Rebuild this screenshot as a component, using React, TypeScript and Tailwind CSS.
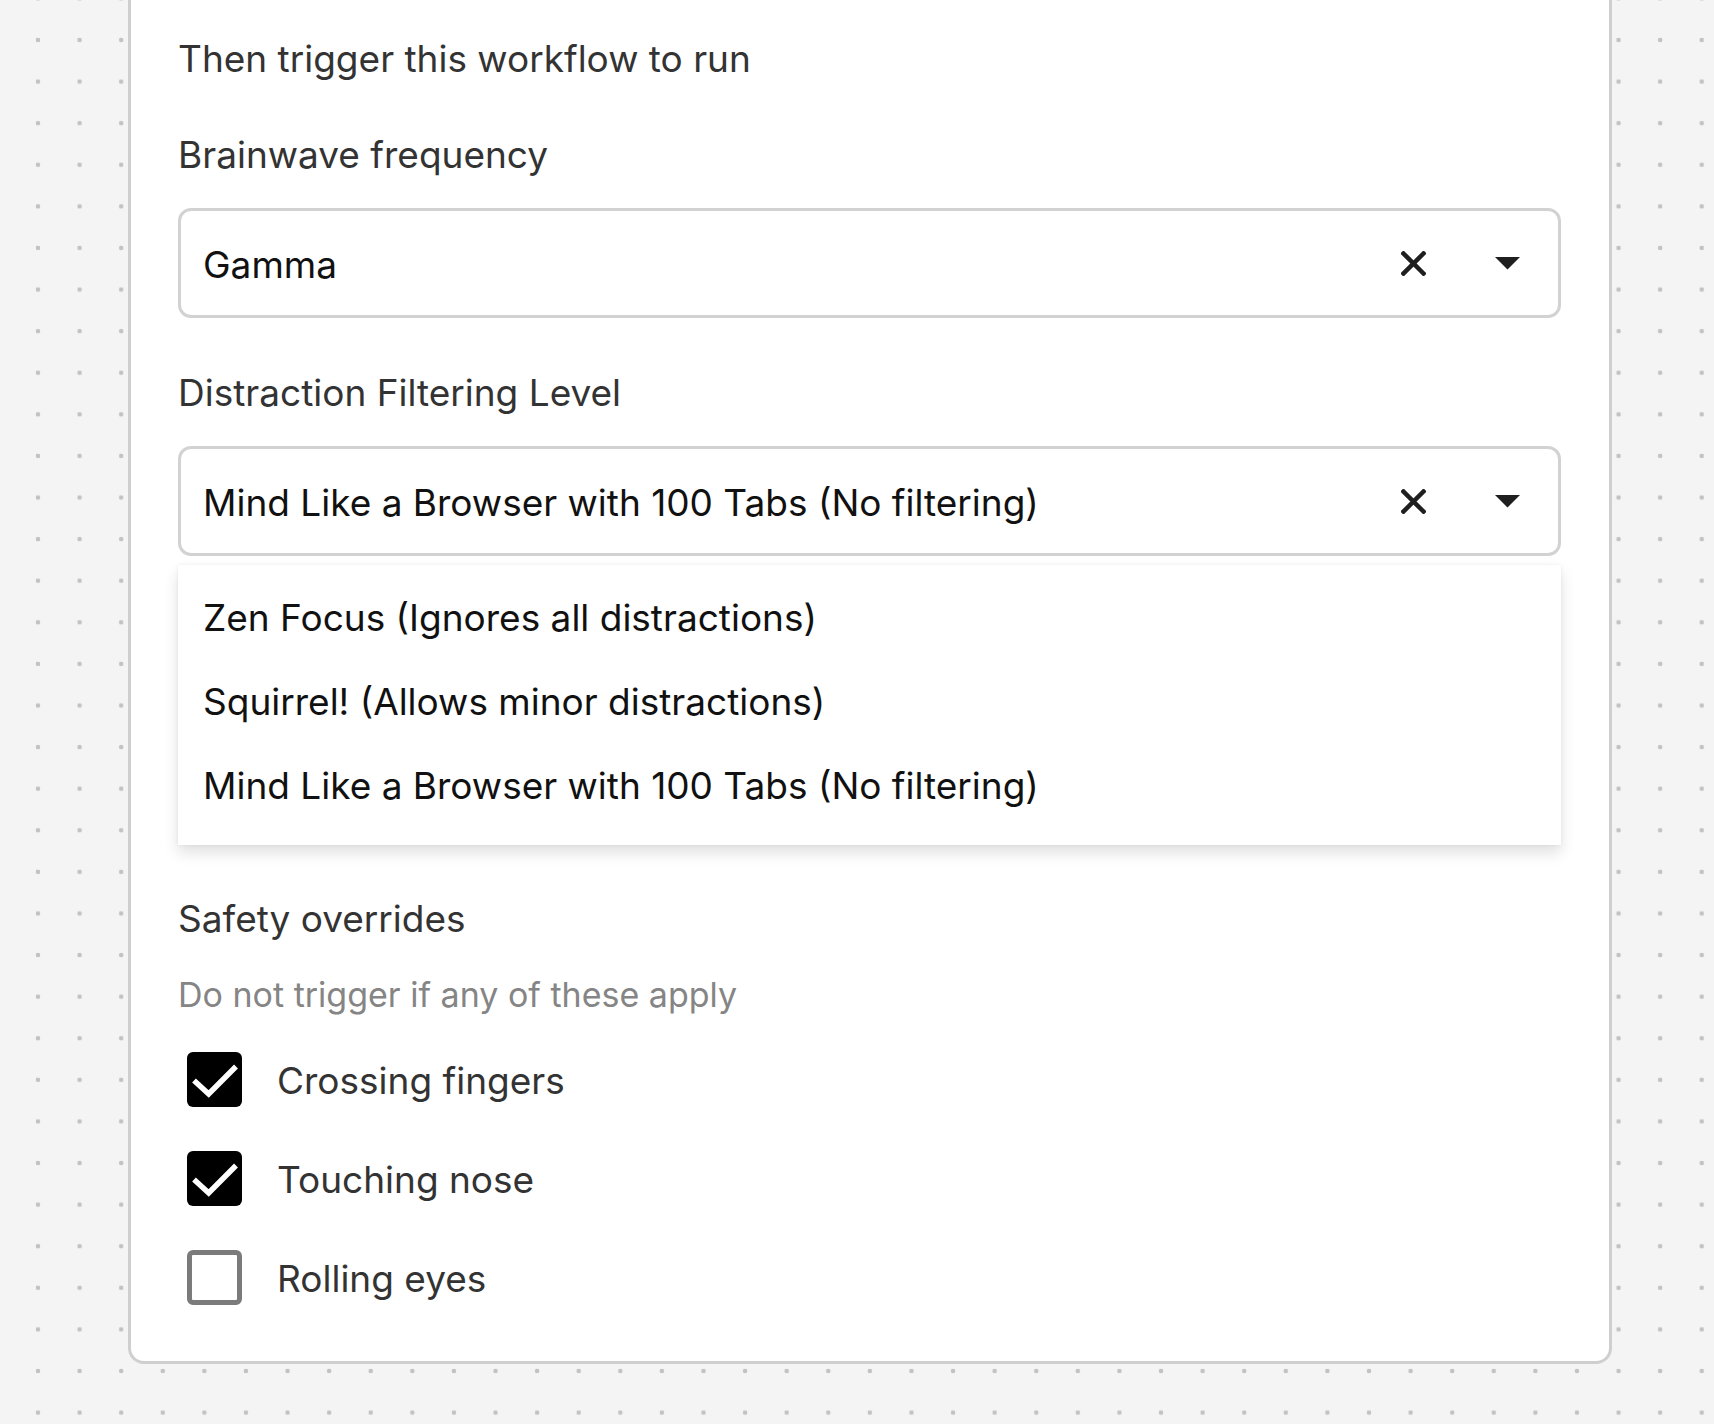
import React from "react";

function XIcon() {
  return (
    <svg width="25" height="25" viewBox="0 0 25 25" className="shrink-0">
      <path d="M2.5 2.5 L22.5 22.5 M22.5 2.5 L2.5 22.5" stroke="#1f1f1f" strokeWidth="4.5" strokeLinecap="square" fill="none" />
    </svg>
  );
}

function Caret() {
  return (
    <svg width="25" height="13" viewBox="0 0 25 13" className="shrink-0">
      <polygon points="0,0 25,0 12.5,12.5" fill="#1f1f1f" />
    </svg>
  );
}

function Select({ value }: { value: string }) {
  return (
    <div className="flex h-[110px] items-center rounded-[13px] border-[3px] border-[#d2d2d2] bg-white pl-[22px] pr-[38px]">
      <span className="flex-1 pt-[3px] text-[37px] leading-[44px] text-[#111111]">{value}</span>
      <div className="flex items-center gap-[69px]">
        <XIcon />
        <Caret />
      </div>
    </div>
  );
}

function Checkbox({ checked, label }: { checked: boolean; label: string }) {
  return (
    <div className="flex h-[55px] items-center gap-[35px] pl-[9px]">
      {checked ? (
        <div className="flex h-[55px] w-[55px] items-center justify-center rounded-[6px] bg-black">
          <svg width="55" height="55" viewBox="0 0 55 55">
            <polyline points="7,28.5 21.7,42 49,14.5" stroke="white" strokeWidth="5.5" fill="none" />
          </svg>
        </div>
      ) : (
        <div className="h-[55px] w-[55px] rounded-[6px] border-[5px] border-[#7b7b7b] bg-white" />
      )}
      <span className="pt-[2px] text-[37px] leading-[44px] text-[#333333]">{label}</span>
    </div>
  );
}

export default function App() {
  const options = [
    "Zen Focus (Ignores all distractions)",
    "Squirrel! (Allows minor distractions)",
    "Mind Like a Browser with 100 Tabs (No filtering)",
  ];
  return (
    <div
      className="min-h-[1424px] w-full bg-[#f4f4f4] bg-[radial-gradient(circle,#c2c2c2_2px,transparent_2.6px)] bg-[length:41.6px_41.6px] bg-[position:17.2px_19.2px]"
      style={{ fontFamily: "Inter, 'Noto Sans', sans-serif" }}
    >
      <div className="ml-[128px] w-[1484px] rounded-b-[16px] border-[3px] border-t-0 border-[#cfcfcf] bg-white pl-[47px] pr-[48px] pt-[37px] pb-[56px]">
        <div className="text-[37px] leading-[44px] text-[#333333]">Then trigger this workflow to run</div>

        <div className="mt-[52px] text-[37px] leading-[44px] text-[#333333]">Brainwave frequency</div>
        <div className="mt-[31px]">
          <Select value="Gamma" />
        </div>

        <div className="mt-[53px] text-[37px] leading-[44px] text-[#333333]">Distraction Filtering Level</div>
        <div className="mt-[31px]">
          <Select value="Mind Like a Browser with 100 Tabs (No filtering)" />
        </div>

        <div className="mt-[9px] flex flex-col bg-white pt-[11px] pb-[17px] shadow-[0_8px_14px_rgba(0,0,0,0.12),0_0_4px_rgba(0,0,0,0.06)]">
          {options.map((o) => (
            <div key={o} className="flex h-[84px] items-center pl-[25px] text-[37px] leading-[44px] text-[#111111]">
              {o}
            </div>
          ))}
        </div>

        <div className="mt-[52px] text-[37px] leading-[44px] text-[#333333]">Safety overrides</div>
        <div className="mt-[34px] text-[34px] leading-[40px] text-[#858585]">Do not trigger if any of these apply</div>

        <div className="mt-[37px] flex flex-col gap-[44px]">
          <Checkbox checked label="Crossing fingers" />
          <Checkbox checked label="Touching nose" />
          <Checkbox checked={false} label="Rolling eyes" />
        </div>
      </div>
    </div>
  );
}
